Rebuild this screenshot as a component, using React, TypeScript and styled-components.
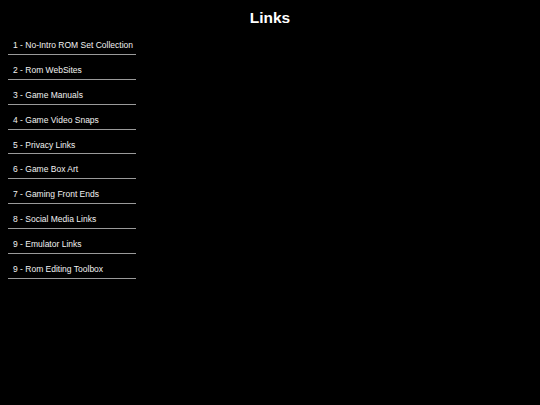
import * as React from 'react';
import styled, {createGlobalStyle} from 'styled-components';

const GlobalStyle = createGlobalStyle`
	html, body {
		margin: 0;
		padding: 0;
		background: #000;
	}
	body {
		padding: 8px;
		font-family: "Liberation Sans", Arial, sans-serif;
		color: #fff;
	}
`;

const Page = styled.div`
	display: flex;
	flex-direction: column;
	gap: 2px;
`;

const Title = styled.h1`
	margin: 0;
	font-size: 15.5px;
	line-height: 20px;
	font-weight: bold;
	text-align: center;
	color: #fff;
`;

const LinkList = styled.ul`
	list-style: none;
	margin: 0;
	padding: 0;
	width: 128px;
`;

const LinkItem = styled.li`
	border-bottom: 1px solid #9a9a9a;
`;

const LinkAnchor = styled.a`
	display: block;
	padding: 10px 5px 3.9px;
	font-size: 8.5px;
	line-height: 10px;
	color: #f2f2f2;
	text-decoration: none;
	white-space: nowrap;
`;

const items = [
	'1 - No-Intro ROM Set Collection',
	'2 - Rom WebSites',
	'3 - Game Manuals',
	'4 - Game Video Snaps',
	'5 - Privacy Links',
	'6 - Game Box Art',
	'7 - Gaming Front Ends',
	'8 - Social Media Links',
	'9 - Emulator Links',
	'9 - Rom Editing Toolbox',
];

export default function App() {
	return (
		<>
			<GlobalStyle />
			<Page>
				<Title>Links</Title>
				<LinkList>
					{items.map((text, index) => (
						<LinkItem key={index}>
							<LinkAnchor href="#">{text}</LinkAnchor>
						</LinkItem>
					))}
				</LinkList>
			</Page>
		</>
	);
}
